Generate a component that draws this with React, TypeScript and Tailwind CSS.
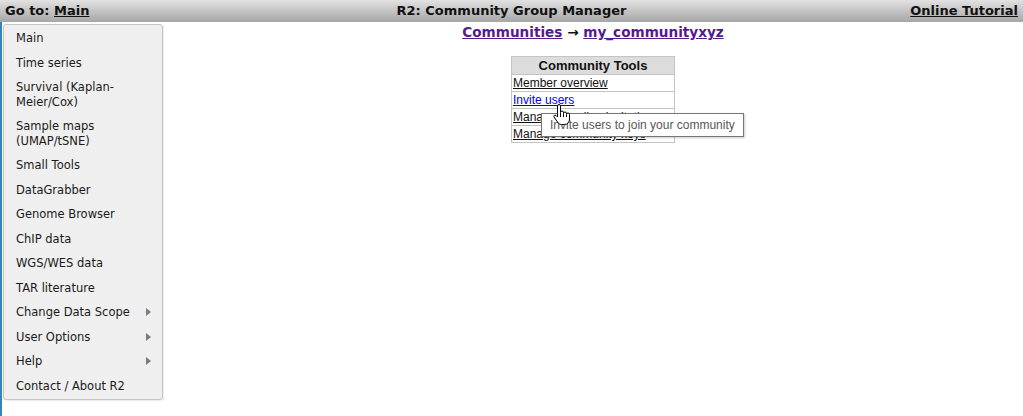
import React from "react";

const menuItems: { label: string[]; sub?: boolean }[] = [
    { label: ["Main"] },
    { label: ["Time series"] },
    { label: ["Survival (Kaplan-", "Meier/Cox)"] },
    { label: ["Sample maps", "(UMAP/tSNE)"] },
    { label: ["Small Tools"] },
    { label: ["DataGrabber"] },
    { label: ["Genome Browser"] },
    { label: ["ChIP data"] },
    { label: ["WGS/WES data"] },
    { label: ["TAR literature"] },
    { label: ["Change Data Scope"], sub: true },
    { label: ["User Options"], sub: true },
    { label: ["Help"], sub: true },
    { label: ["Contact / About R2"] },
];

const tools = [
    { label: "Member overview", hover: false },
    { label: "Invite users", hover: true },
    { label: "Manage pending invitations", hover: false },
    { label: "Manage community keys", hover: false },
];

// pointer shown over the hovered link
const HandCursor = () => (
    <svg width="18" height="22" viewBox="0 0 18 22">
        <path
            d="M5.5 2a1.5 1.5 0 0 1 3 0v6.5a1.5 1.5 0 0 1 3 0v1a1.5 1.5 0 0 1 3 0v1a1.5 1.5 0 0 1 3 0v4.5c0 3-2 5.5-5 5.5h-3c-2 0-3-1-4-2.5l-3.5-5c-.8-1.2.8-2.5 2-1.5l1.5 1.5z"
            fill="#fff"
            stroke="#000"
            strokeWidth="1"
            strokeLinejoin="round"
        />
        <path d="M8.5 9v4M11.5 10v3M14.5 11v2" stroke="#000" strokeWidth="1" />
    </svg>
);

const App = () => {
    return (
        <div className="min-h-screen bg-white font-['DejaVu_Sans',Verdana,sans-serif] text-[#111]">
            <header className="grid h-[22px] grid-cols-3 items-center bg-gradient-to-b from-[#e2e2e2] to-[#a6a6a6] px-[5px] text-[13px] font-bold">
                <div>
                    Go to: <a className="underline">Main</a>
                </div>
                <div className="text-center">R2: Community Group Manager</div>
                <div className="text-right">
                    <a className="underline">Online Tutorial</a>
                </div>
            </header>

            <div className="flex min-h-[394px] border-l-2 border-[#2f86bb]">
                <nav className="ml-[1px] mt-[2px] mb-auto w-[160px] rounded-[3px] border border-[#c6c6c6] bg-[#efefef] py-[1px] text-[11.5px] text-[#1a1a1a] shadow-[1px_1px_1px_rgba(0,0,0,0.08)]">
                    {menuItems.map((item) => (
                        <div
                            key={item.label.join(" ")}
                            className="flex items-center justify-between py-[5px] pl-[12px] pr-[11px] leading-[14.5px]"
                        >
                            <div>
                                {item.label.map((l) => (
                                    <div key={l}>{l}</div>
                                ))}
                            </div>
                            {item.sub && (
                                <span className="h-0 w-0 border-y-[4.5px] border-l-[5px] border-y-transparent border-l-[#7b7b7b]" />
                            )}
                        </div>
                    ))}
                </nav>

                <main className="flex flex-1 flex-col items-center pt-[2px]">
                    <div className="text-[13.6px] font-bold leading-[16px] text-[#551a8b]">
                        <a className="underline">Communities</a>
                        <span className="text-[#111]"> → </span>
                        <a className="underline">my_communityxyz</a>
                    </div>

                    <div className="relative mt-[16px]">
                        <table className="w-[164px] border-collapse border border-[#c4c4c4] font-['Liberation_Sans',Arial,sans-serif]">
                            <thead>
                                <tr>
                                    <th className="border border-[#c4c4c4] bg-[#dcdcdc] py-[1px] text-[13px] leading-[15px] text-[#111]">
                                        Community Tools
                                    </th>
                                </tr>
                            </thead>
                            <tbody>
                                {tools.map((t) => (
                                    <tr key={t.label}>
                                        <td className="max-w-[164px] overflow-hidden whitespace-nowrap border border-[#c4c4c4] px-[1px] py-[1px] text-left text-[12px] leading-[14px]">
                                            <a className={t.hover ? "text-[#0000ee] underline" : "text-[#111] underline"}>
                                                {t.label}
                                            </a>
                                        </td>
                                    </tr>
                                ))}
                            </tbody>
                        </table>

                        <div className="absolute left-[30px] top-[57px] z-10 whitespace-nowrap border border-[#767676] bg-white px-[8px] py-[4px] font-['Liberation_Sans',Arial,sans-serif] text-[12px] leading-[14px] text-[#575757] shadow-[1px_1px_2px_rgba(0,0,0,0.2)]">
                            Invite users to join your community
                        </div>
                        <div className="pointer-events-none absolute left-[41px] top-[48px] z-20">
                            <HandCursor />
                        </div>
                    </div>
                </main>
            </div>
        </div>
    );
};

export default App;
